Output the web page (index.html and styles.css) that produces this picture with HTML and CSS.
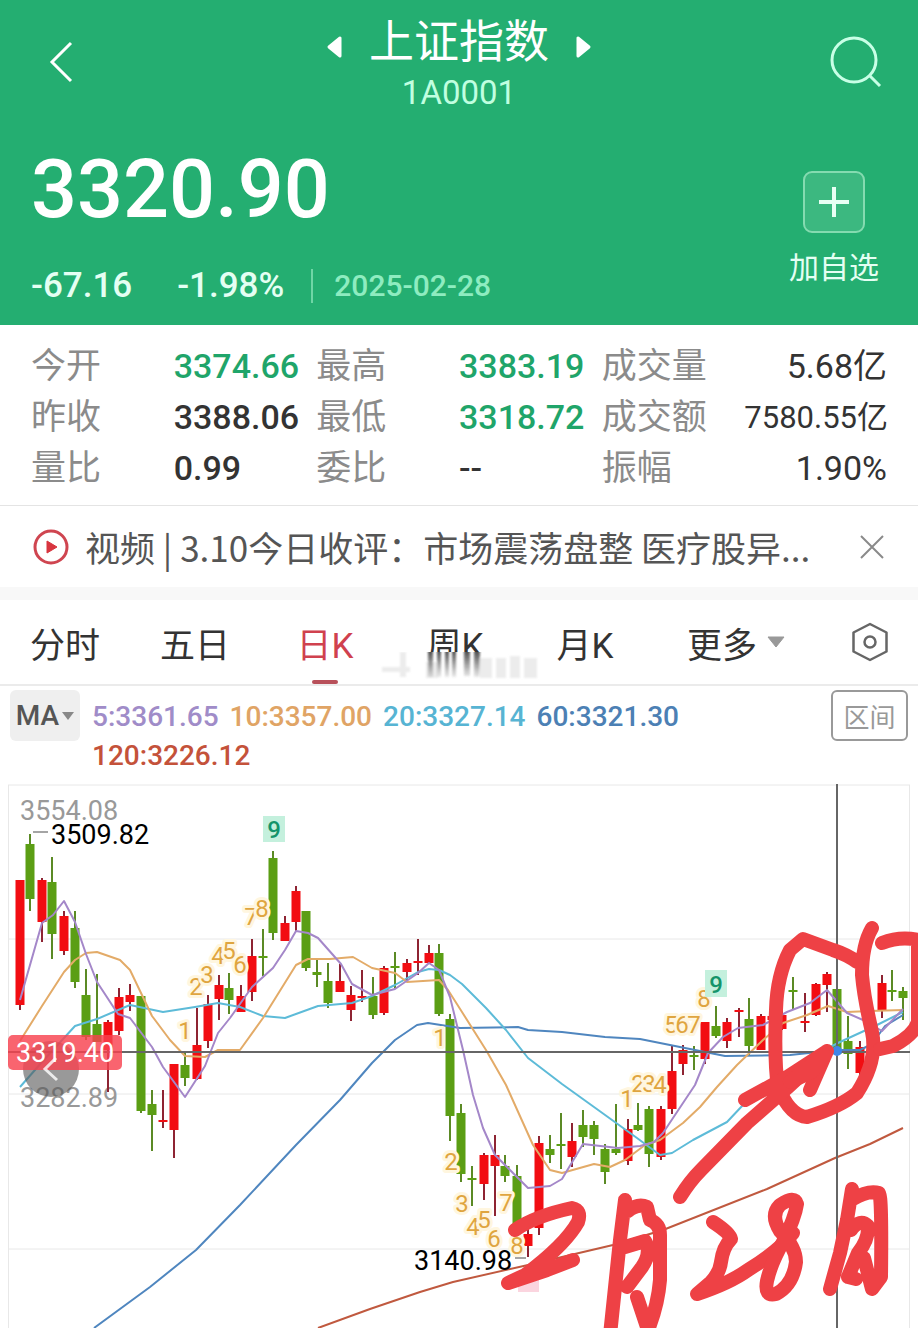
FILE: index.html
```html
<!DOCTYPE html>
<html lang="zh-CN">
<head>
    <meta charset="UTF-8">
    <meta name="viewport" content="width=device-width, initial-scale=1.0">
    <title>上证指数</title>
    <link rel="stylesheet" href="styles.css">
</head>
<body>
    <header class="header">
        <div class="topbar">
            <button class="icon-btn" aria-label="返回">
                <svg width="60" height="60" viewBox="0 0 60 60"><path d="M40 13L21 32L40 51" fill="none" stroke="#fff" stroke-width="3"/></svg>
            </button>
            <div class="title">
                <div class="title-row">
                    <button class="icon-btn" aria-label="上一个">
                        <svg width="18" height="32" viewBox="0 0 18 32"><path d="M14 11V29L3 20Z" fill="#fff" stroke="#fff" stroke-width="3" stroke-linejoin="round"/></svg>
                    </button>
                    <h1>上证指数</h1>
                    <button class="icon-btn" aria-label="下一个">
                        <svg width="18" height="32" viewBox="0 0 18 32"><path d="M4 11V29L15 20Z" fill="#fff" stroke="#fff" stroke-width="3" stroke-linejoin="round"/></svg>
                    </button>
                </div>
                <div class="code">1A0001</div>
            </div>
            <button class="icon-btn" aria-label="搜索">
                <svg width="60" height="60" viewBox="0 0 60 60"><g fill="none" stroke="#c8ffe6" stroke-width="3"><circle cx="27" cy="30" r="22"/><path d="M43 46L53 56"/></g></svg>
            </button>
        </div>
        <div class="quote">
            <div>
                <div class="price">3320.90</div>
                <div class="change">
                    <span>-67.16</span>
                    <span>-1.98%</span>
                    <time datetime="2025-02-28">2025-02-28</time>
                </div>
            </div>
            <button class="add">
                <span class="add-box"><svg width="32" height="32" viewBox="0 0 32 32"><path d="M16 1V31M1 16H31" stroke="#e8fff4" stroke-width="4"/></svg></span>
                加自选
            </button>
        </div>
    </header>

    <dl class="stats">
        <dt>今开</dt><dd class="down">3374.66</dd>
        <dt>最高</dt><dd class="down">3383.19</dd>
        <dt>成交量</dt><dd class="last">5.68亿</dd>
        <dt>昨收</dt><dd>3388.06</dd>
        <dt>最低</dt><dd class="down">3318.72</dd>
        <dt>成交额</dt><dd class="last long">7580.55亿</dd>
        <dt>量比</dt><dd>0.99</dd>
        <dt>委比</dt><dd>--</dd>
        <dt>振幅</dt><dd class="last">1.90%</dd>
    </dl>

    <div class="news">
        <svg width="36" height="36" viewBox="0 0 36 36"><circle cx="18" cy="18" r="16" fill="none" stroke="#cf4550" stroke-width="3"/><path d="M14 12V24L24 18Z" fill="#d8353f" stroke="#d8353f" stroke-linejoin="round"/></svg>
        <a class="news-text" href="#">视频 | 3.10今日收评：市场震荡盘整 医疗股异...</a>
        <button class="icon-btn" aria-label="关闭">
            <svg width="24" height="24" viewBox="0 0 24 24"><path d="M1 1L23 23M23 1L1 23" stroke="#8a8a8a" stroke-width="2"/></svg>
        </button>
    </div>

    <nav class="tabs">
        <button class="tab">分时</button>
        <button class="tab">五日</button>
        <button class="tab active">日K</button>
        <button class="tab">周K
            <svg class="smear" width="160" height="30" viewBox="0 0 160 30">
                <defs>
                    <linearGradient id="fade" x1="0" y1="0" x2="0" y2="1">
                        <stop offset="0" stop-color="#444"/>
                        <stop offset="1" stop-color="#666" stop-opacity="0.15"/>
                    </linearGradient>
                    <filter id="soft"><feGaussianBlur stdDeviation="1"/></filter>
                </defs>
                <rect width="160" height="30" fill="#fff"/>
                <g filter="url(#soft)">
                    <path d="M2 15h28v5h-28zM20 0h6v25h-6zM46 10h12v16h-12zM100 6h12v20h-12zM116 6h10v20h-10zM130 4h10v22h-10zM144 6h13v20h-13z" fill="#ececec"/>
                    <path d="M48 -2h5v27h-5zM57 -2h4v27h-4zM65 -2h4v27h-4zM72 -2h4v27h-4zM84 -2h6v26h-6zM94 -2h6v27h-6z" fill="url(#fade)"/>
                </g>
            </svg>
        </button>
        <button class="tab">月K</button>
        <button class="tab tab-more">更多
            <svg width="18" height="12" viewBox="0 0 18 12"><path d="M1 1H17L9 11Z" fill="#999" stroke="#999" stroke-linejoin="round"/></svg>
        </button>
        <button class="tab tab-set" aria-label="设置">
            <svg width="38" height="40" viewBox="0 0 38 40"><g fill="none" stroke="#666" stroke-width="2.500" stroke-linejoin="round"><path d="M19 2L35.500 10.500V29.500L19 38L2.500 29.500V10.500Z"/><circle cx="19" cy="20" r="5.500"/></g></svg>
        </button>
    </nav>

    <div class="ma">
        <button class="ma-btn">MA<svg width="12" height="8" viewBox="0 0 12 8"><path d="M0 0H12L6 8Z" fill="#888"/></svg></button>
        <div class="ma-list">
            <span class="ma5">5:3361.65</span>
            <span class="ma10">10:3357.00</span>
            <span class="ma20">20:3327.14</span>
            <span class="ma60">60:3321.30</span>
            <span class="ma120">120:3226.12</span>
        </div>
        <button class="range-btn">区间</button>
    </div>

    <svg class="chart" viewBox="0 784 918 544">
        <path class="grid" d="M8 785H910M8 939H910M8 1094H910M8 1249H910M8.500 785V1328M909.500 785V1328"/>
        <text class="axis" x="20" y="820">3554.08</text>
        <text class="axis" x="20" y="1107">3282.89</text>
        <rect x="518" y="1276" width="21" height="16" fill="#fbd5df"/>

        <g id="candles"></g>

        <g class="line">
            <polyline stroke="#4f86bf" points="94,1328 150,1287 196,1250 240,1205 296,1145 340,1100 372,1063 395,1040 417,1025 428,1023 460,1028 518,1027 528,1030 562,1032 605,1037 640,1039 675,1046 710,1053 725,1056 790,1055 837,1050 860,1050 872,1044 885,1026 903,1015"/>
            <polyline stroke="#c0593f" points="318,1328 370,1309 420,1292 453,1282 528,1265 613,1245 663,1230 767,1189 835,1158 870,1144 903,1128"/>
            <polyline stroke="#5dbbd8" points="20,1087 42,1062 75,1026 97,1019 130,1005 163,1012 195,1007 218,1003 240,1007 263,1016 285,1018 318,1006 352,1003 372,996 395,985 418,972 429,969 439,970 450,975 462,984 486,1008 506,1030 528,1058 562,1084 594,1107 637,1138 660,1155 672,1153 693,1140 727,1122 743,1105 777,1080 805,1060 840,1042 877,1025 903,1012"/>
            <polyline stroke="#e3ab68" points="20,1041 42,1006 64,972 75,960 86,953 97,952 120,960 130,970 152,1016 170,1040 185,1056 205,1057 218,1050 240,1050 263,1018 296,965 308,959 330,959 353,957 372,968 395,973 407,982 439,980 448,990 462,1012 486,1050 506,1085 533,1145 550,1170 562,1173 594,1164 610,1167 625,1160 645,1145 660,1140 683,1123 700,1107 717,1087 737,1065 763,1040 783,1023 807,1015 828,1006 847,1012 870,1011 903,1010"/>
            <polyline stroke="#a487c9" points="20,1000 42,923 53,915 64,901 75,922 86,954 97,982 118,1014 130,1018 152,1047 163,1067 185,1097 205,1066 218,1033 230,1018 252,987 273,968 285,950 296,931 308,933 318,938 341,964 352,984 372,995 395,989 418,973 429,963 439,970 450,997 463,1050 473,1095 483,1128 495,1155 515,1175 528,1188 550,1186 562,1179 583,1144 618,1148 640,1146 654,1142 663,1133 695,1085 708,1053 723,1037 738,1028 763,1025 787,1012 810,1003 827,990 847,1013 863,1020 882,1031 903,1009"/>
        </g>

        <g id="counts" class="count"></g>
        <g class="nine">
            <rect x="263" y="816" width="22" height="26"/>
            <text x="274" y="838">9</text>
            <rect x="705" y="970" width="22" height="27"/>
            <text x="716" y="993">9</text>
        </g>

        <path class="cross" d="M8 1052H910M837 784V1328"/>
        <circle cx="837" cy="1051" r="5" fill="#3f86e8"/>

        <path d="M33 832H48M515 1258H526" stroke="#888" stroke-width="1.500"/>
        <text class="peak" x="51" y="844">3509.82</text>
        <text class="peak" x="414" y="1270">3140.98</text>

        <circle cx="51" cy="1069" r="28" fill="#555" fill-opacity="0.6"/>
        <rect x="8" y="1035" width="114" height="35" rx="5" fill="#f8424f" fill-opacity="0.82"/>
        <path d="M56 1058L45 1069L57 1080" fill="none" stroke="#fff" stroke-opacity="0.8" stroke-width="3"/>
        <text class="tag" x="16" y="1062">3319.40</text>

        <!-- hand-drawn marks -->
        <g class="pen">
            <path d="M872 928Q862 945 862 975Q864 998 872 1032Q878 1060 857 1093Q840 1107 807 1117Q790 1116 778 1087Q774 1062 776 1010Q777 975 790 950L803 939L833 950Q848 955 857 962"/>
            <path d="M882 943Q900 936 918 940V1022Q914 1035 893 1046L880 1049"/>
            <path d="M680 1197Q690 1181 701 1170L747 1123L787 1088L827 1051L810 1090M745 1100L787 1077L827 1051M790 1078L815 1066"/>
            <path d="M790 1082L824 1055L812 1072Z"/>
            <path d="M515 1230Q535 1216 572 1208Q582 1210 578 1222Q565 1245 525 1275L508 1283L547 1270L573 1260"/>
            <path d="M625 1200L620 1240L610 1335M628 1211Q638 1203 647 1207L650 1220Q660 1224 660 1235V1280Q658 1305 648 1330L637 1297M625 1247L645 1241Q652 1252 642 1267L627 1287"/>
            <path d="M713 1222Q730 1233 731 1239Q723 1247 721 1262Q720 1272 711 1282L697 1294Q730 1283 748 1270Q780 1250 793 1233"/>
            <path d="M797 1204Q795 1195 780 1205Q770 1215 780 1231Q796 1247 796 1262Q793 1285 776 1294Q764 1297 767 1281Q771 1263 783 1242Q795 1218 797 1204"/>
            <path d="M852 1189L847 1220L840 1253L830 1289M853 1199Q868 1190 879 1193Q882 1195 881 1277L872 1289L864 1258M851 1230Q860 1218 868 1226Q869 1239 858 1253L848 1277L856 1279"/>
        </g>
    </svg>

    <script src="chart.js"></script>
</body>
</html>
```
FILE: styles.css
```css
* {
    box-sizing: border-box;
}
body {
    margin: 0;
    background: #fff;
    color: #333;
    font-family: Roboto, "Noto Sans CJK SC", sans-serif;
    font-size: 35px;
}
button {
    padding: 0;
    border: none;
    background: none;
    color: inherit;
    font: inherit;
    cursor: pointer;
}
svg {
    display: block;
}

/* header */
.header {
    padding: 14px 31px 18px;
    background: #24ae71;
    color: #fff;
}
.topbar {
    display: flex;
    justify-content: space-between;
    align-items: flex-start;
}
.topbar > .icon-btn {
    padding-top: 16px;
}
.title {
    text-align: center;
}
.title-row {
    display: flex;
    align-items: center;
    gap: 25px;
}
.title h1 {
    margin: 0;
    font-size: 45px;
    font-weight: 400;
    line-height: 58px;
}
.code {
    font-size: 33px;
    line-height: 42px;
    color: #c0ffe0;
}
.quote {
    display: flex;
    justify-content: space-between;
    align-items: flex-end;
    padding-top: 20px;
}
.price {
    font-size: 81px;
    font-weight: 500;
    line-height: 112px;
}
.change {
    display: flex;
    align-items: center;
    gap: 45px;
    padding-top: 18px;
    font-weight: 500;
    line-height: 43px;
}
.change span {
    color: #e4fff3;
}
.change time {
    margin-left: -18px;
    padding-left: 21px;
    border-left: 2px solid #6fd6a6;
    font-size: 30px;
    line-height: 34px;
    color: #8eecc0;
}
.add {
    display: flex;
    flex-direction: column;
    align-items: center;
    gap: 14px;
    padding: 0 8px 18px 0;
    font-size: 30px;
    line-height: 42px;
    color: #e4fff3;
}
.add-box {
    display: flex;
    align-items: center;
    justify-content: center;
    width: 62px;
    height: 62px;
    border: 2px solid #84dbb0;
    border-radius: 9px;
    background: #3cb880;
}

/* quote numbers */
.stats {
    display: grid;
    grid-template-columns: repeat(6, minmax(0, 1fr));
    margin: 0;
    padding: 16px 31px 11px;
    border-bottom: 1px solid #e4e4e4;
    line-height: 51px;
}
.stats dt {
    color: #8b8b8b;
    white-space: nowrap;
}
.stats dd {
    margin: 0;
    font-size: 34px;
    font-weight: 500;
    white-space: nowrap;
}
.stats .down {
    color: #1fa56a;
}
.stats .last {
    font-weight: 400;
    text-align: right;
}
.stats .long {
    font-size: 31px;
}

.news {
    display: flex;
    align-items: center;
    gap: 16px;
    height: 94px;
    padding: 0 34px 0 33px;
    border-bottom: 13px solid #f8f8f8;
}
.news svg {
    flex: none;
}
.news-text {
    flex: 1;
    overflow: hidden;
    color: #555;
    font-family: "Noto Sans CJK SC", sans-serif;
    text-decoration: none;
    white-space: nowrap;
}

/* period tabs */
.tabs {
    display: flex;
    height: 86px;
    border-bottom: 2px solid #ebebeb;
}
.tab {
    position: relative;
    display: flex;
    flex: 130 1 0;
    align-items: center;
    justify-content: center;
    white-space: nowrap;
}
.tab.active {
    color: #d0414e;
}
.tab.active::after {
    content: "";
    position: absolute;
    bottom: 0;
    width: 26px;
    height: 4px;
    border-radius: 2px;
    background: #b8505a;
}
.tab-more {
    flex-grow: 172;
    gap: 10px;
}
.tab-set {
    flex-grow: 96;
}
.smear {
    position: absolute;
    top: 52px;
    left: -10px;
}

/* MA legend */
.ma {
    display: flex;
    align-items: flex-start;
    gap: 12px;
    padding: 4px 10px 9px;
}
.ma-btn {
    display: flex;
    align-items: center;
    justify-content: center;
    gap: 3px;
    width: 70px;
    height: 51px;
    border-radius: 6px;
    background: #efefef;
    color: #555;
    font-size: 28px;
    font-weight: 500;
}
.ma-list {
    display: flex;
    flex: 1;
    flex-wrap: wrap;
    column-gap: 11px;
    padding-top: 7px;
    font-size: 28px;
    font-weight: 500;
    line-height: 39px;
}
.ma5 { color: #a08cc8; }
.ma10 { color: #e0a465; }
.ma20 { color: #57b4d3; }
.ma60 { color: #4c80b4; }
.ma120 { color: #c4523a; }
.range-btn {
    width: 77px;
    height: 51px;
    border: 2px solid #999;
    border-radius: 6px;
    color: #999;
    font-size: 26px;
}

/* chart */
.chart {
    width: 100%;
    font-size: 27px;
}
.grid {
    stroke: #e8e8e8;
}
.axis {
    fill: #999;
}
.peak {
    fill: #000;
}
.tag {
    fill: #fff;
}
.line {
    fill: none;
    stroke-width: 2;
    stroke-linejoin: round;
}
.up {
    fill: #f20d12;
    stroke: #8e2433;
}
.fall {
    fill: #5b9e14;
    stroke: #5b8a25;
}
.candle rect {
    stroke: none;
}
.candle path {
    stroke-width: 2;
}
.count {
    fill: #dfa53f;
    stroke: #fff6df;
    stroke-width: 6px;
    stroke-linejoin: round;
    paint-order: stroke;
    font-size: 24px;
    text-anchor: middle;
}
.nine rect {
    fill: #c4f0dd;
}
.nine text {
    fill: #14946a;
    font-size: 24px;
    font-weight: 500;
    text-anchor: middle;
}
.cross {
    stroke: #666;
    stroke-width: 2;
}
.pen {
    fill: none;
    stroke: #ee4145;
    stroke-width: 14;
    stroke-linecap: round;
    stroke-linejoin: round;
}
```
FILE: chart.js
```javascript
const NS = 'http://www.w3.org/2000/svg';

// x, high, low, body top, body bottom, up (1) or down (0)
const candles = [
    [20, 880, 1010, 880, 1005, 1], [30, 834, 911, 844, 899, 0], [42, 878, 942, 880, 922, 1],
    [52, 857, 959, 882, 934, 0], [64, 911, 955, 916, 951, 1], [75, 911, 988, 928, 982, 0],
    [86, 969, 1040, 995, 1037, 0], [97, 974, 1042, 1024, 1042, 0], [108, 1020, 1092, 1022, 1050, 1],
    [119, 988, 1035, 997, 1031, 1], [130, 984, 1011, 995, 1002, 1], [141, 996, 1113, 996, 1111, 0],
    [152, 1090, 1151, 1104, 1115, 0], [163, 1090, 1128, 1120, 1122, 1], [174, 1064, 1158, 1064, 1130, 1],
    [185, 1053, 1086, 1065, 1078, 0], [197, 1008, 1080, 1045, 1079, 1], [208, 995, 1048, 1004, 1041, 1],
    [219, 975, 1020, 985, 999, 1], [229, 973, 1014, 988, 1000, 0], [241, 985, 1012, 996, 1012, 1],
    [252, 939, 1001, 956, 992, 1], [263, 929, 976, 956, 958, 0], [273, 851, 940, 858, 933, 0],
    [285, 916, 941, 923, 941, 1], [296, 886, 932, 891, 922, 1], [306, 911, 971, 911, 968, 0],
    [317, 959, 987, 972, 975, 0], [328, 963, 1008, 981, 1003, 0], [340, 964, 992, 981, 992, 1],
    [351, 986, 1021, 995, 1010, 1], [362, 970, 1002, 996, 998, 1], [373, 977, 1019, 996, 1015, 0],
    [384, 966, 1015, 968, 1013, 1], [395, 952, 988, 966, 968, 0], [407, 959, 980, 963, 972, 1],
    [418, 939, 975, 961, 963, 1], [429, 945, 964, 953, 963, 1], [439, 944, 1016, 953, 1014, 0],
    [450, 1014, 1141, 1019, 1116, 0], [461, 1104, 1182, 1113, 1174, 0], [472, 1166, 1206, 1178, 1180, 0],
    [484, 1153, 1200, 1155, 1184, 1], [495, 1135, 1216, 1155, 1166, 1], [505, 1155, 1182, 1166, 1176, 0],
    [517, 1165, 1240, 1176, 1225, 0], [528, 1228, 1257, 1234, 1246, 1], [539, 1136, 1235, 1143, 1228, 1],
    [550, 1135, 1163, 1149, 1155, 0], [561, 1113, 1169, 1144, 1146, 0], [572, 1123, 1167, 1141, 1157, 1],
    [583, 1110, 1147, 1125, 1137, 0], [594, 1121, 1155, 1125, 1139, 0], [605, 1144, 1184, 1149, 1172, 0],
    [616, 1104, 1155, 1149, 1153, 0], [628, 1119, 1165, 1129, 1161, 1], [638, 1103, 1131, 1125, 1130, 0],
    [649, 1106, 1167, 1109, 1154, 0], [661, 1106, 1160, 1109, 1157, 1], [672, 1046, 1114, 1071, 1109, 1],
    [683, 1045, 1075, 1050, 1064, 1], [694, 1046, 1070, 1055, 1057, 0], [705, 1022, 1064, 1022, 1059, 1],
    [716, 1006, 1038, 1026, 1036, 0], [727, 1018, 1048, 1022, 1041, 1], [739, 1008, 1037, 1010, 1012, 1],
    [749, 998, 1056, 1019, 1046, 0], [761, 1014, 1050, 1016, 1050, 1], [772, 1010, 1030, 1016, 1020, 1],
    [782, 1010, 1030, 1015, 1029, 1], [793, 977, 1010, 990, 992, 0], [805, 993, 1032, 1021, 1023, 1],
    [816, 983, 1016, 984, 1015, 1], [827, 972, 1012, 974, 985, 1], [837, 989, 1056, 989, 1054, 0],
    [848, 1016, 1069, 1041, 1054, 0], [860, 1041, 1077, 1047, 1073, 1], [882, 975, 1018, 983, 1010, 1],
    [892, 970, 1001, 990, 992, 0], [903, 987, 1020, 991, 998, 0]
];

// x, baseline, number
const counts = [
    [185, 1039, 1], [196, 995, 2], [207, 983, 3], [218, 964, 4], [229, 959, 5], [240, 973, 6],
    [251, 925, 7], [262, 917, 8],
    [440, 1046, 1], [451, 1170, 2], [462, 1212, 3], [473, 1235, 4], [484, 1228, 5], [494, 1247, 6],
    [506, 1211, 7], [517, 1254, 8],
    [627, 1107, 1], [638, 1092, 2], [649, 1092, 3], [660, 1093, 4], [671, 1033, 5], [682, 1033, 6],
    [694, 1033, 7], [704, 1007, 8]
];

function add(parent, name, attrs) {
    const el = document.createElementNS(NS, name);
    for (const key in attrs) {
        el.setAttribute(key, attrs[key]);
    }
    parent.appendChild(el);
    return el;
}

const candleLayer = document.getElementById('candles');
candles.forEach(([x, high, low, top, bottom, up]) => {
    const g = add(candleLayer, 'g', { class: 'candle ' + (up ? 'up' : 'fall') });
    add(g, 'path', { d: `M${x} ${high}V${low}` });
    add(g, 'rect', { x: x - 4.5, y: top, width: 9, height: bottom - top });
});

const countLayer = document.getElementById('counts');
counts.forEach(([x, y, n]) => {
    add(countLayer, 'text', { x, y }).textContent = n;
});
```
